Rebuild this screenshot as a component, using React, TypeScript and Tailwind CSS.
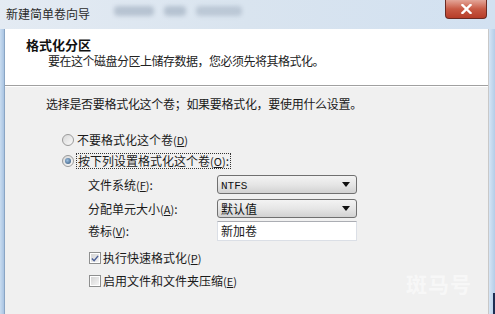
import React from "react";

const CJK = { fontFamily: '"Noto Sans CJK SC", "Noto Sans", sans-serif' };

function Mn({ k }: { k: string }) {
  return (
    <span className="text-[11px]">
      (<span className="underline underline-offset-[1px]">{k}</span>)
    </span>
  );
}

function Radio({ checked }: { checked?: boolean }) {
  return (
    <div className="w-[12px] h-[12px] rounded-full border border-[#9a9a9a] bg-gradient-to-br from-[#d8d8d8] to-[#fafafa] flex items-center justify-center shrink-0">
      {checked && (
        <div className="w-[6px] h-[6px] rounded-full bg-[radial-gradient(circle_at_40%_40%,#9dc0e0,#2c4e74)]" />
      )}
    </div>
  );
}

function Check({ checked }: { checked?: boolean }) {
  return (
    <div className="w-[12px] h-[12px] border border-[#8e8f8f] bg-white p-[1px] shrink-0">
      <div className="w-full h-full bg-gradient-to-br from-[#d4d4d4] to-[#f4f4f4] flex items-center justify-center">
        {checked && (
          <svg width="9" height="9" viewBox="0 0 9 9">
            <path d="M1 4.5 L3.5 7 L8 1.5" fill="none" stroke="#4a5f97" strokeWidth="1.6" />
          </svg>
        )}
      </div>
    </div>
  );
}

function Combo({ children }: { children: React.ReactNode }) {
  return (
    <div className="w-[140px] h-[19px] rounded-[3px] border border-[#707070] bg-gradient-to-b from-[#f3f3f3] via-[#e6e6e6] to-[#d2d2d2] flex items-center pl-[3px] pr-[6px]">
      <div className="flex-1 text-[12px] leading-[14px] text-[#111]">{children}</div>
      <svg width="8" height="5" viewBox="0 0 8 5">
        <path d="M0 0 H8 L4 5 Z" fill="#111" />
      </svg>
    </div>
  );
}

export default function App() {
  return (
    <div
      className="w-[495px] h-[314px] overflow-hidden relative bg-[#c6d9ee] text-[#1a1a1a]"
      style={CJK}
    >
      {/* title bar */}
      <div className="h-[29px] flex items-start bg-gradient-to-r from-[#e4ebf3] via-[#d9e4ef] to-[#d2e1f1] relative">
        <span className="ml-[6px] mt-[6px] text-[12px] leading-[16px] text-[#2a2a2a]">
          新建简单卷向导
        </span>
        <div className="ml-[24px] mt-[6px] flex gap-[10px] opacity-40 blur-[2px]">
          <div className="w-[40px] h-[10px] bg-[#7d8ea3] rounded" />
          <div className="w-[22px] h-[10px] bg-[#7d8ea3] rounded" />
          <div className="w-[46px] h-[10px] bg-[#8e9db0] rounded" />
        </div>
        <div className="ml-auto mr-[8px] w-[42px] h-[19px] rounded-b-[4px] border border-t-0 border-[#6b2a22] bg-gradient-to-b from-[#e3a598] via-[#c85a45] to-[#b63c28] flex items-center justify-center">
          <svg width="11" height="10" viewBox="0 0 11 10">
            <path d="M1.5 1 L9.5 9 M9.5 1 L1.5 9" stroke="#fff" strokeWidth="2.4" strokeLinecap="square" />
          </svg>
        </div>
      </div>

      <div className="flex h-[285px]">
        {/* left frame */}
        <div className="w-[5px] bg-gradient-to-r from-[#c9dcf0] to-[#a9c4e2] border-r border-[#8aa5c4]" />

        <div className="flex-1 flex flex-col">
          {/* header */}
          <div className="h-[57px] bg-white border-b border-[#a0a0a0] flex flex-col">
            <div className="mt-[8px] ml-[21px] text-[13px] leading-[16px] font-bold text-[#111]">
              格式化分区
            </div>
            <div className="mt-[0px] ml-[43px] text-[12px] leading-[15px] tracking-[-0.5px] text-[#222]">
              要在这个磁盘分区上储存数据，您必须先将其格式化。
            </div>
          </div>

          {/* body */}
          <div className="flex-1 bg-[#f0f0f0] border-t border-white flex flex-col relative">
            <div className="mt-[9px] ml-[41px] text-[12px] leading-[16px] tracking-[-0.3px]">
              选择是否要格式化这个卷；如果要格式化，要使用什么设置。
            </div>

            <div className="mt-[20px] ml-[57px] h-[16px] flex items-center gap-[3px] text-[12px] leading-[16px]">
              <Radio />
              <span>
                不要格式化这个卷<Mn k="D" />
              </span>
            </div>

            <div className="mt-[4px] ml-[57px] h-[18px] flex items-center gap-[2px] text-[12px] leading-[16px]">
              <Radio checked />
              <span className="border border-dotted border-[#333] px-[1px] leading-[14px]">
                按下列设置格式化这个卷<Mn k="O" />:
              </span>
            </div>

            <div className="mt-[5px] ml-[83px] flex items-center h-[19px]">
              <div className="w-[129px] text-[12px] leading-[16px]">
                文件系统<Mn k="F" />:
              </div>
              <Combo>
                <span className="text-[11px]" style={{ fontFamily: '"Liberation Mono", monospace' }}>
                  NTFS
                </span>
              </Combo>
            </div>

            <div className="mt-[5px] ml-[83px] flex items-center h-[19px]">
              <div className="w-[129px] text-[12px] leading-[16px]">
                分配单元大小<Mn k="A" />:
              </div>
              <Combo>默认值</Combo>
            </div>

            <div className="mt-[3px] ml-[83px] flex items-center h-[20px]">
              <div className="w-[129px] text-[12px] leading-[16px]">
                卷标<Mn k="V" />:
              </div>
              <div className="w-[140px] h-[20px] bg-white border border-[#dbdfe6] border-t-[#abadb3] flex items-center pl-[3px] text-[12px]">
                新加卷
              </div>
            </div>

            <div className="mt-[9px] ml-[84px] h-[16px] flex items-center gap-[2px] text-[12px] leading-[16px]">
              <Check checked />
              <span>
                执行快速格式化<Mn k="P" />
              </span>
            </div>

            <div className="mt-[7px] ml-[84px] h-[16px] flex items-center gap-[2px] text-[12px] leading-[16px]">
              <Check />
              <span>
                启用文件和文件夹压缩<Mn k="E" />
              </span>
            </div>

            <div className="absolute left-[401px] top-[181px] text-[21px] font-bold text-white/50 tracking-[1px]">
              斑马号
            </div>
          </div>
        </div>

        {/* right frame */}
        <div className="w-[7px] bg-gradient-to-r from-[#d6e5f5] to-[#b4cde8] border-l border-[#c8c8c8] flex flex-col">
          <div className="flex-1" />
          <div className="h-[21px] bg-[#1e2d52] ml-[4px]" />
        </div>
      </div>
    </div>
  );
}
